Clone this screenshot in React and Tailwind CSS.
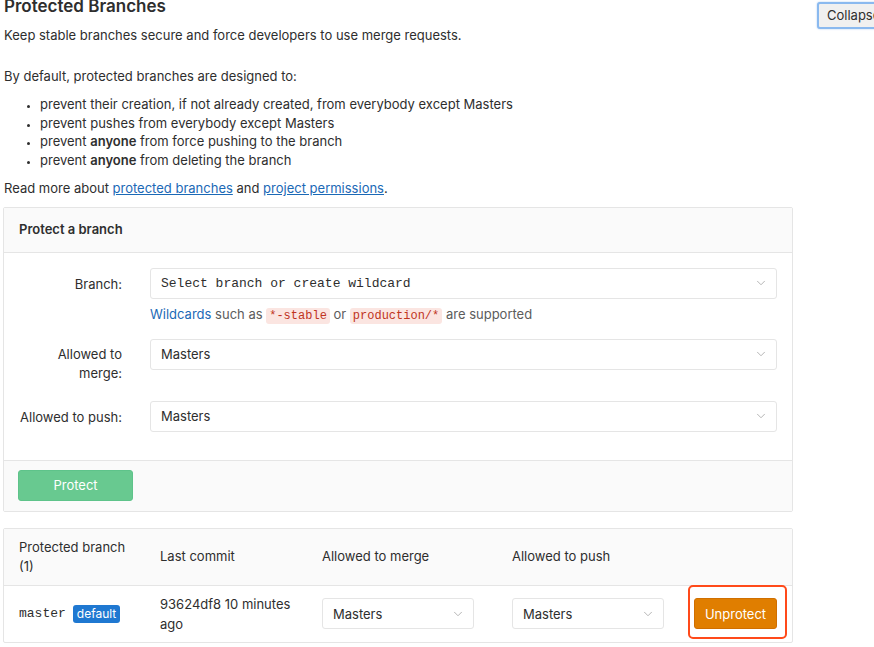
import { ChevronDown } from "lucide-react";

const sans = { fontFamily: 'Inter, "Liberation Sans", Arial, sans-serif' };
const mono = { fontFamily: '"Liberation Mono", "DejaVu Sans Mono", monospace' };

function Select({ value, isMono, className = "" }) {
  return (
    <div
      className={`flex h-[31px] items-center justify-between rounded-[3px] border border-[#e5e5e5] bg-white pl-[10px] pr-[8px] text-[13px] text-[#2e2e2e] ${className}`}
      style={isMono ? mono : undefined}
    >
      <span>{value}</span>
      <ChevronDown className="h-[14px] w-[14px] text-[#aaa]" strokeWidth={1.5} />
    </div>
  );
}

function Code({ children }) {
  return (
    <code className="rounded-[3px] bg-[#fbe5e1] px-[3px] py-[1px] text-[12px] text-[#c0341d]" style={mono}>
      {children}
    </code>
  );
}

export default function App() {
  return (
    <div className="flex min-h-screen bg-white text-[13px] text-[#2e2e2e]" style={sans}>
      <div className="w-[797px] shrink-0 pl-[3px]">
        <h3 className="-mt-[5px] pl-[1px] text-[17px] font-semibold leading-[22px] text-[#2e2e2e]">Protected Branches</h3>
        <p className="mt-[9px] pl-[1px] leading-[18px]">Keep stable branches secure and force developers to use merge requests.</p>
        <p className="mt-[23px] pl-[1px] leading-[18px]">By default, protected branches are designed to:</p>
        <ul className="mt-[10px] list-disc pl-[37px] leading-[18.7px] marker:text-[10px]">
          <li>prevent their creation, if not already created, from everybody except Masters</li>
          <li>prevent pushes from everybody except Masters</li>
          <li>
            prevent <b className="font-semibold">anyone</b> from force pushing to the branch
          </li>
          <li>
            prevent <b className="font-semibold">anyone</b> from deleting the branch
          </li>
        </ul>
        <p className="mt-[9px] pl-[1px] leading-[18px]">
          Read more about{" "}
          <a className="text-[#1b69b6] underline">protected branches</a> and{" "}
          <a className="text-[#1b69b6] underline">project permissions</a>.
        </p>

        <div className="mt-[10px] w-[790px] rounded-[2px] border border-[#e5e5e5]">
          <div className="flex h-[45px] items-center border-b border-[#e5e5e5] bg-[#fafafa] px-[15px] font-semibold text-[#2e2e2e]">
            Protect a branch
          </div>
          <div className="flex flex-col pb-[28px] pl-[16px] pr-[15px] pt-[15px]">
            <div className="flex gap-[28px]">
              <div className="w-[102px] pt-[7px] text-right leading-[18px]">Branch:</div>
              <div className="flex-1">
                <Select value="Select branch or create wildcard" isMono />
                <div className="mt-[6px] leading-[18px] text-[#5c5c5c]">
                  <a className="text-[#1b69b6]">Wildcards</a> such as <Code>*-stable</Code> or <Code>production/*</Code> are supported
                </div>
              </div>
            </div>
            <div className="mt-[14px] flex gap-[28px]">
              <div className="w-[102px] pt-[6px] text-right leading-[19px]">
                Allowed to
                <br />
                merge:
              </div>
              <div className="flex-1">
                <Select value="Masters" />
              </div>
            </div>
            <div className="mt-[18px] flex gap-[28px]">
              <div className="w-[102px] whitespace-nowrap pt-[7px] text-right leading-[18px]">Allowed to push:</div>
              <div className="flex-1">
                <Select value="Masters" />
              </div>
            </div>
          </div>
          <div className="flex h-[51px] items-center border-t border-[#e5e5e5] bg-[#fafafa] px-[14px]">
            <button className="h-[31px] w-[115px] rounded-[3px] border border-[#5ec38a] bg-[#68c990] text-[13px] text-white">
              Protect
            </button>
          </div>
        </div>

        <div className="mt-[16px] w-[790px] rounded-[2px] border border-[#e5e5e5]">
          <div className="grid h-[57px] grid-cols-[141px_162px_190px_183px_1fr] items-center border-b border-[#e5e5e5] bg-[#fafafa] leading-[19px] text-[#2e2e2e]">
            <div className="px-[15px]">
              Protected branch
              <br />
              (1)
            </div>
            <div className="px-[15px]">Last commit</div>
            <div className="px-[15px]">Allowed to merge</div>
            <div className="px-[15px]">Allowed to push</div>
            <div />
          </div>
          <div className="grid h-[56px] grid-cols-[141px_162px_190px_183px_1fr] items-center leading-[20px]">
            <div className="flex items-center gap-[7px] px-[15px]">
              <span className="text-[13px] text-[#2e2e2e]" style={mono}>
                master
              </span>
              <span className="rounded-[3px] bg-[#1f78d1] px-[4px] text-[12px] leading-[18px] text-white">default</span>
            </div>
            <div className="px-[15px]">
              93624df8 10 minutes
              <br />
              ago
            </div>
            <div className="px-[15px]">
              <Select value="Masters" className="w-[152px]" />
            </div>
            <div className="px-[15px]">
              <Select value="Masters" className="w-[152px]" />
            </div>
            <div className="pl-[14px]">
              <div className="relative w-[83px]">
                <button className="h-[31px] w-[83px] rounded-[3px] border border-[#d06f00] bg-[#e07e00] text-[13px] text-white">
                  Unprotect
                </button>
                <div className="pointer-events-none absolute -bottom-[10px] -left-[6px] -right-[10px] -top-[13px] rounded-[5px] border-2 border-[#ff4a1a]" />
              </div>
            </div>
          </div>
        </div>
      </div>

      <div className="ml-[20px] pt-[2px]">
        <div className="flex h-[27px] items-center whitespace-nowrap rounded-[3px] border-2 border-[#8ab9ef] bg-[#f0f0f0] pl-[8px] pr-[8px] text-[13px] text-[#2e2e2e] shadow-[0_0_2px_#a8c8f0]">
          Collapse
        </div>
      </div>
    </div>
  );
}
